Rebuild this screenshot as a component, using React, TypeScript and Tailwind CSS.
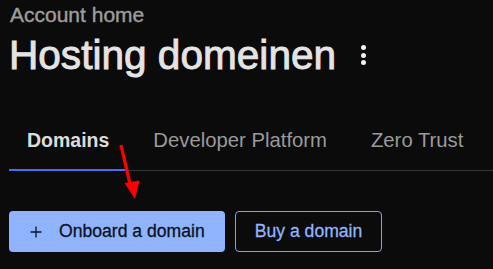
import React from "react";

const tabs = ["Domains", "Developer Platform", "Zero Trust"];

const App = () => {
  return (
    <div
      className="relative w-[493px] h-[269px] overflow-hidden bg-[#0b0b0b] px-[9px] pt-[3px]"
      style={{ fontFamily: '"Liberation Sans", Arial, sans-serif' }}
    >
      {/* header */}
      <div className="text-[21px] leading-[24px] text-[#9d9d9d] pl-[1px] [-webkit-text-stroke:0.4px]">
        Account home
      </div>
      <div className="mt-[4px] flex items-center">
        <h1 className="text-[40.6px] leading-[48px] font-normal text-[#e4e4e4] [-webkit-text-stroke:0.9px]">
          Hosting domeinen
        </h1>
        <button className="ml-[21px] flex flex-col items-center gap-[2.5px] px-1">
          <span className="block w-[5px] h-[5px] rounded-full bg-[#f0f0f0]" />
          <span className="block w-[5px] h-[5px] rounded-full bg-[#f0f0f0]" />
          <span className="block w-[5px] h-[5px] rounded-full bg-[#f0f0f0]" />
        </button>
      </div>

      {/* tabs */}
      <div className="mt-[49px] -mr-[9px] flex gap-[8px] border-b border-[#353535]">
        {tabs.map((t, i) => (
          <button
            key={t}
            className={
              i === 0
                ? "-mb-px px-[18px] pb-[17px] text-[19.5px] leading-[24px] font-bold text-[#dcdcdc] border-b-2 border-[#3f6ef3]"
                : "-mb-px px-[18px] pb-[17px] text-[20.3px] leading-[24px] text-[#9a9a9a] border-b-2 border-transparent"
            }
          >
            {t}
          </button>
        ))}
      </div>

      {/* actions */}
      <div className="mt-[40px] flex gap-[10px] text-[17.6px] [-webkit-text-stroke:0.3px]">
        <button className="h-[41px] flex items-center gap-[17px] pl-[21px] pr-[20px] rounded-[4px] bg-[#8fb4fd] text-[#0d1220]">
          <svg width="12" height="12" viewBox="0 0 12 12" fill="none">
            <path d="M6 0.5V11.5M0.5 6H11.5" stroke="#0d1220" strokeWidth="1.3" />
          </svg>
          <span>Onboard a domain</span>
        </button>
        <button className="h-[41px] flex items-center px-[19px] rounded-[4px] border border-[#7ea3ea] text-[#8fb4fd]">
          Buy a domain
        </button>
      </div>

      {/* annotation arrow */}
      <svg className="absolute left-0 top-0 pointer-events-none" width="493" height="269">
        <line x1="121" y1="145" x2="130" y2="184" stroke="#ff0000" strokeWidth="3.3" />
        <polygon points="124.5,183 139.5,180.5 135,199" fill="#ff0000" />
      </svg>
    </div>
  );
};

export default App;
